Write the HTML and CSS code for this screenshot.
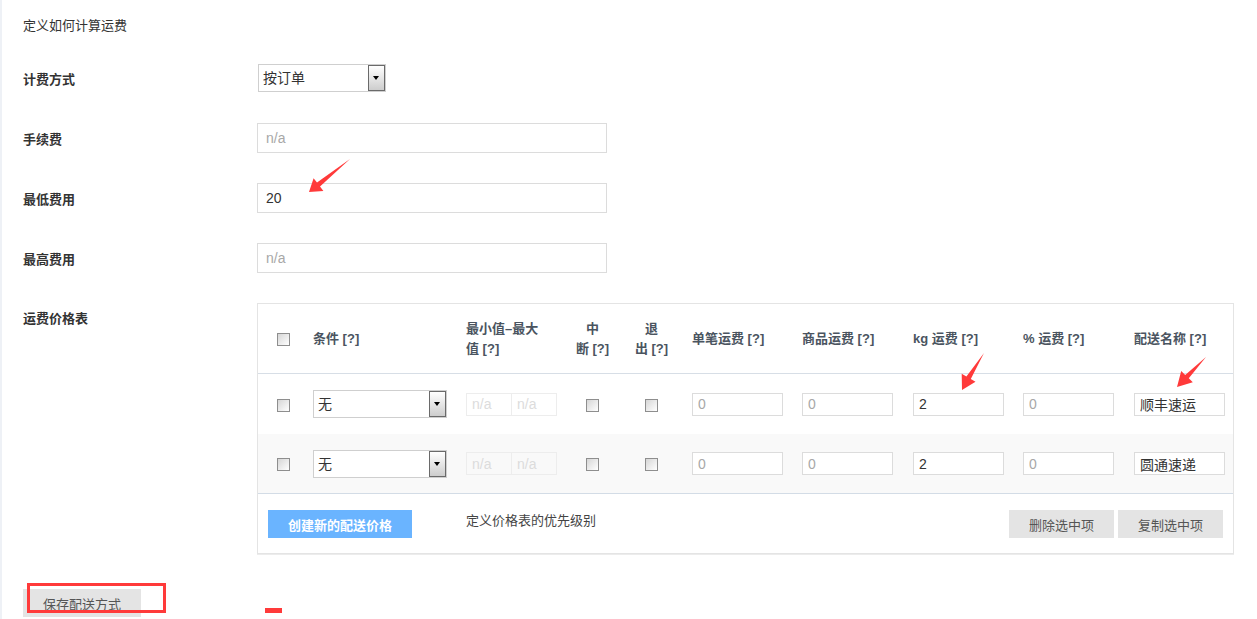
FILE: index.html
```html
<!DOCTYPE html>
<html lang="zh-CN">
<head>
    <meta charset="UTF-8">
    <meta name="viewport" content="width=device-width, initial-scale=1.0">
    <title>配送方式</title>
    <link rel="stylesheet" href="styles.css">
</head>
<body>

    <div class="page">
        <p class="intro">定义如何计算运费</p>

        <div class="form-row form-row-first">
            <label class="form-label">计费方式</label>
            <div class="select select-wide">
                <span class="select-text">按订单</span>
                <span class="select-arrow"></span>
            </div>
        </div>

        <div class="form-row">
            <label class="form-label" for="fee">手续费</label>
            <input type="text" id="fee" class="form-control" placeholder="n/a">
        </div>

        <div class="form-row">
            <label class="form-label" for="minFee">最低费用</label>
            <input type="text" id="minFee" class="form-control" value="20">
        </div>

        <div class="form-row">
            <label class="form-label" for="maxFee">最高费用</label>
            <input type="text" id="maxFee" class="form-control" placeholder="n/a">
        </div>

        <div class="form-row form-row-top">
            <label class="form-label table-label">运费价格表</label>
            <div class="rate-box">
                <table class="rate-table">
                    <colgroup>
                        <col style="width:45px">
                        <col style="width:153px">
                        <col style="width:108px">
                        <col style="width:57px">
                        <col style="width:61px">
                        <col style="width:110px">
                        <col style="width:111px">
                        <col style="width:110px">
                        <col style="width:111px">
                        <col style="width:109px">
                    </colgroup>
                    <thead>
                        <tr>
                            <th class="col-check"><span class="check"></span></th>
                            <th>条件 [?]</th>
                            <th>最小值–最大<br>值 [?]</th>
                            <th class="col-center">中<br>断 [?]</th>
                            <th class="col-center">退<br>出 [?]</th>
                            <th>单笔运费 [?]</th>
                            <th>商品运费 [?]</th>
                            <th>kg 运费 [?]</th>
                            <th>% 运费 [?]</th>
                            <th>配送名称 [?]</th>
                        </tr>
                    </thead>
                    <tbody>
                        <tr>
                            <td class="col-check"><span class="check"></span></td>
                            <td>
                                <div class="select select-row">
                                    <span class="select-text">无</span>
                                    <span class="select-arrow"></span>
                                </div>
                            </td>
                            <td>
                                <div class="range">
                                    <input type="text" class="range-input" placeholder="n/a">
                                    <input type="text" class="range-input" placeholder="n/a">
                                </div>
                            </td>
                            <td class="col-center"><span class="check"></span></td>
                            <td class="col-center"><span class="check"></span></td>
                            <td><input type="text" class="cell-input" placeholder="0"></td>
                            <td><input type="text" class="cell-input" placeholder="0"></td>
                            <td><input type="text" class="cell-input" value="2"></td>
                            <td><input type="text" class="cell-input" placeholder="0"></td>
                            <td><input type="text" class="cell-input" value="顺丰速运"></td>
                        </tr>
                        <tr class="row-alt">
                            <td class="col-check"><span class="check"></span></td>
                            <td>
                                <div class="select select-row">
                                    <span class="select-text">无</span>
                                    <span class="select-arrow"></span>
                                </div>
                            </td>
                            <td>
                                <div class="range">
                                    <input type="text" class="range-input" placeholder="n/a">
                                    <input type="text" class="range-input" placeholder="n/a">
                                </div>
                            </td>
                            <td class="col-center"><span class="check"></span></td>
                            <td class="col-center"><span class="check"></span></td>
                            <td><input type="text" class="cell-input" placeholder="0"></td>
                            <td><input type="text" class="cell-input" placeholder="0"></td>
                            <td><input type="text" class="cell-input" value="2"></td>
                            <td><input type="text" class="cell-input" placeholder="0"></td>
                            <td><input type="text" class="cell-input" value="圆通速递"></td>
                        </tr>
                    </tbody>
                </table>

                <div class="rate-footer">
                    <button class="btn btn-primary">创建新的配送价格</button>
                    <span class="footer-note">定义价格表的优先级别</span>
                    <div class="footer-actions">
                        <button class="btn btn-gray">删除选中项</button>
                        <button class="btn btn-gray">复制选中项</button>
                    </div>
                </div>
            </div>
        </div>

        <div class="actions">
            <button class="btn btn-save">保存配送方式</button>
        </div>
    </div>

    <!-- screenshot annotations -->
    <svg class="marks" width="1257" height="619" viewBox="0 0 1257 619">
        <polygon points="350,159 320,186.6 323.4,190.9 309,192 313.6,178.3 317,182.6" />
        <polygon points="984,353 970.8,379.1 975.5,381.8 962,390 961.7,373.8 966.4,376.5" />
        <polygon points="1206,357 1188.8,378.3 1192.8,382.2 1177,387 1181.2,371 1185.2,374.9" />
        <rect class="mark-box" x="28.5" y="584.5" width="136" height="27" />
        <rect x="265" y="608" width="17" height="5" />
    </svg>

</body>
</html>
```

FILE: styles.css
```css
html, body {
    overflow: hidden;
}

body {
    font-family: "Liberation Sans", "Noto Sans CJK SC", sans-serif;
    font-size: 13px;
    color: #333;
    background-color: #ffffff;
    margin: 0;
    padding: 0;
}

.page {
    border-left: 2px solid #eef1f6;
    padding: 17px 0 0 21px;
    height: 619px;
    box-sizing: border-box;
}

.intro {
    margin: 0 0 29px;
    line-height: 18px;
}

.form-row {
    display: grid;
    grid-template-columns: 234px auto;
    align-items: center;
    justify-items: start;
    margin-bottom: 30px;
}

.form-row-first {
    margin-bottom: 31px;
}

.form-row-top {
    align-items: start;
    margin-bottom: 0;
}

.form-label {
    font-weight: bold;
    line-height: 18px;
    margin-top: 3px;
    color: #333;
}

.table-label {
    margin-top: 0;
    padding-top: 7px;
}

.form-control {
    width: 350px;
    height: 30px;
    padding: 0 8px;
    font-family: inherit;
    font-size: 14px;
    color: #333;
    border: 1px solid #dcdcdc;
    box-sizing: border-box;
    outline: none;
}

.form-control::placeholder,
.cell-input::placeholder {
    color: #a8a8a8;
}

/* old style select box */
.select {
    display: flex;
    height: 28px;
    border: 1px solid #cfcfcf;
    box-sizing: border-box;
    background-color: #fff;
}

.select-wide {
    width: 128px;
    margin-left: 1px;
}

.select-row {
    width: 134px;
}

.select-text {
    flex: 1;
    padding-left: 4px;
    line-height: 26px;
    font-size: 14px;
    color: #333;
}

.select-arrow {
    position: relative;
    width: 17px;
    border: 1px solid #6a6a6a;
    box-sizing: border-box;
    background: linear-gradient(#ffffff, #cdcdcd);
}

.select-arrow::after {
    content: "";
    position: absolute;
    left: 4px;
    top: 10px;
    border-left: 3.5px solid transparent;
    border-right: 3.5px solid transparent;
    border-top: 4px solid #000;
}

.check {
    display: inline-block;
    width: 13px;
    height: 13px;
    border: 1px solid #8e8e8e;
    box-sizing: border-box;
    background: linear-gradient(135deg, #d6d6d6, #ffffff);
    vertical-align: middle;
}

/* rate table */
.rate-box {
    width: 977px;
    border: 1px solid #e4e4e4;
    box-shadow: 0 1px 0 #ececec;
    box-sizing: border-box;
    background-color: #fff;
}

.rate-table {
    width: 100%;
    table-layout: fixed;
    border-collapse: separate;
    border-spacing: 0;
}

.rate-table th {
    height: 69px;
    padding: 0 10px;
    text-align: left;
    vertical-align: middle;
    font-weight: bold;
    line-height: 20px;
    color: #4a5460;
    border-bottom: 1px solid #d7dee6;
    white-space: nowrap;
}

.rate-table td {
    height: 60px;
    padding: 0 10px;
    vertical-align: middle;
}

.rate-table .row-alt td {
    height: 59px;
    background-color: #f9f9f9;
    border-bottom: 1px solid #d3dce6;
}

.rate-table .col-check {
    padding: 0 0 0 19px;
}

.rate-table .col-center {
    padding: 0;
    text-align: center;
}

.range {
    display: flex;
}

.range-input {
    width: 46px;
    height: 23px;
    padding: 0 5px;
    font-family: inherit;
    font-size: 14px;
    border: 1px solid #ededed;
    box-sizing: border-box;
    background: transparent;
    outline: none;
}

.range-input + .range-input {
    margin-left: -1px;
}

.range-input::placeholder {
    color: #dcdcdc;
}

.cell-input {
    width: 91px;
    height: 23px;
    padding: 0 5px;
    font-family: inherit;
    font-size: 14px;
    color: #333;
    border: 1px solid #dcdcdc;
    box-sizing: border-box;
    background-color: #fff;
    outline: none;
}

.rate-footer {
    display: flex;
    align-items: flex-start;
    padding: 16px 10px 15px;
}

.btn {
    height: 28px;
    padding: 0;
    border: none;
    font-family: inherit;
    font-size: 13px;
    cursor: pointer;
}

.btn-primary {
    width: 144px;
    background-color: #6ab4ff;
    color: #fff;
    font-weight: bold;
}

.btn-gray {
    width: 105px;
    background-color: #e4e4e4;
    color: #555;
}

.footer-note {
    margin-left: 54px;
    line-height: 22px;
    color: #444;
}

.footer-actions {
    display: flex;
    gap: 4px;
    margin-left: auto;
}

.actions {
    display: flex;
    margin-top: 35px;
}

.btn-save {
    width: 118px;
    height: 28px;
    background-color: #e4e4e4;
    color: #555;
}

/* red annotation marks over the page */
.marks {
    position: absolute;
    top: 0;
    left: 0;
    pointer-events: none;
    fill: #ff3a3a;
}

.marks .mark-box {
    fill: none;
    stroke: #ff3a3a;
    stroke-width: 3;
}
```
